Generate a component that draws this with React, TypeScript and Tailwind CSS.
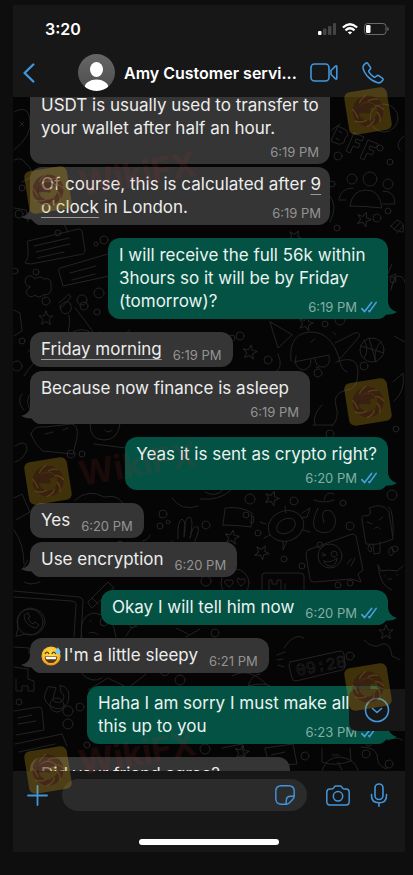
import React from "react";

const Ticks = () => (
  <svg className="h-3 w-4" viewBox="0 0 16 12" fill="none" stroke="#4a9fe0" strokeWidth="1.600" strokeLinecap="round" strokeLinejoin="round">
    <path d="M.8 7.600 3.600 10.600 10.600 1.400M7.800 9.800l.7.800L15.200 1.400" />
  </svg>
);

type BubbleProps = {
  mine?: boolean;
  tail?: boolean;
  time: string;
  // below: time sits on its own row, over: time shares the last text line
  layout?: "inline" | "below" | "over";
  className?: string;
  children: React.ReactNode;
};

const Bubble = ({ mine, tail, time, layout = "inline", className = "", children }: BubbleProps) => {
  const stamp = (
    <span className={`flex items-center gap-1 text-[13px] leading-3 whitespace-nowrap ${mine ? "text-[#86ada4]" : "text-[#939393]"}`}>
      {time}
      {mine && <Ticks />}
    </span>
  );
  return (
    <div
      className={`relative grid rounded-xl px-[11px] py-1.5 text-[17px] leading-[23px] whitespace-nowrap ${
        mine ? "self-end bg-[#045244] text-[#e9f3f0]" : "self-start bg-[#353535] text-[#ededed]"
      } ${className}`}
    >
      {tail && !mine && (
        <svg className="absolute bottom-0 -left-[9px] h-[18px] w-5 text-[#353535]" viewBox="0 0 20 18" fill="currentColor">
          <path d="M9 0C9 5 6 8.500 0 9.800c2 1.700 6 2.500 11 2.700C13 16 16 18 20 18V0Z" />
        </svg>
      )}
      {tail && mine && (
        <svg className="absolute -right-[9px] bottom-0 h-[18px] w-5 text-[#045244]" viewBox="0 0 20 18" fill="currentColor">
          <path d="M11 0c0 5 3 9 9 11-2 1.700-6 2.500-11 2.700C7 16.500 4 18 0 18V0Z" />
        </svg>
      )}
      {layout === "inline" && (
        <div className="relative flex items-end gap-[11px]">
          <p className="flex items-center">{children}</p>
          {stamp}
        </div>
      )}
      {layout === "below" && (
        <div className="relative flex flex-col">
          <p>{children}</p>
          <div className="flex h-[18px] items-end justify-end">{stamp}</div>
        </div>
      )}
      {layout === "over" && (
        <div className="relative grid">
          <p className="col-start-1 row-start-1">{children}</p>
          <div className="col-start-1 row-start-1 self-end justify-self-end">{stamp}</div>
        </div>
      )}
    </div>
  );
};

const SweatSmile = () => (
  <svg role="img" aria-label="😅" className="mr-[3px] h-5 w-5" viewBox="0 0 20 20">
    <defs>
      <radialGradient id="face" cx=".5" cy=".4" r=".6">
        <stop offset="0" stopColor="#ffe14a" />
        <stop offset=".7" stopColor="#fbc02d" />
        <stop offset="1" stopColor="#e88f1c" />
      </radialGradient>
    </defs>
    <circle cx="10" cy="10" r="9.600" fill="url(#face)" />
    <path d="M4.200 7.600q1.800-3 3.700 0M11 7.600q1.800-3 3.700 0" fill="none" stroke="#5b3610" strokeWidth="1.200" strokeLinecap="round" />
    <path d="M3.800 10.500h12.400c0 4.200-2.700 6.600-6.200 6.600s-6.200-2.400-6.200-6.600Z" fill="#5b3610" />
    <path d="M4.600 11h10.800c-.2 1.300-.6 1.900-.9 2.200H5.500c-.4-.5-.8-1.200-.9-2.200Z" fill="#fff" />
    <path d="M16.800 1.200c1.600 2 2.700 3.400 2.700 5a2.600 2.600 0 0 1-5.100 0c0-1.500 1.100-3 2.400-5Z" fill="#7cc8f2" />
  </svg>
);

const STAR = "M0-7 2-2 7-2 3 1.500 4.500 6.500 0 3.500-4.500 6.500-3 1.500-7-2-2-2Z";
const stars = [
  [46, 318, 0], [364, 219, 20], [250, 352, 10], [306, 323, 15], [272, 498, 20], [262, 552, 30],
  [232, 537, 10], [386, 632, 0], [242, 752, 10], [295, 237, 30], [216, 610, 20], [90, 100, 10],
];
const dots = [
  [338, 156, 4], [380, 148, 3], [390, 162, 3], [337, 228, 3], [377, 218, 4], [388, 211, 3], [332, 184, 3],
  [22, 188, 3], [19, 214, 4], [82, 300, 5], [99, 293, 5], [46, 301, 4], [84, 306, 4], [97, 312, 3],
  [22, 341, 3], [104, 240, 4], [96, 244, 2], [393, 280, 3], [340, 320, 5], [325, 324, 3], [232, 338, 3],
  [240, 336, 4], [268, 360, 4], [318, 373, 4], [364, 366, 4], [17, 366, 5], [71, 454, 4], [82, 454, 3],
  [250, 499, 5], [294, 501, 4], [343, 503, 3], [350, 526, 4], [258, 533, 3], [284, 559, 3], [302, 566, 3],
  [246, 515, 3], [206, 525, 4], [395, 549, 3], [163, 514, 4], [168, 522, 2], [160, 526, 3], [206, 581, 5],
  [338, 585, 3], [350, 583, 3], [215, 633, 4], [57, 705, 7], [68, 711, 5], [80, 707, 4], [68, 724, 5],
  [87, 745, 3], [19, 702, 3], [305, 756, 4], [366, 754, 4], [369, 743, 3], [389, 764, 4], [350, 656, 4],
  [189, 695, 4], [180, 680, 5], [205, 749, 5], [120, 544, 3], [104, 622, 4], [15, 271, 3], [36, 272, 3],
  [58, 233, 3], [392, 495, 5], [320, 545, 3], [396, 429, 3], [330, 434, 4],
];

const Wallpaper = () => (
  <svg className="absolute inset-0 h-full w-full" viewBox="13 97 392 674" preserveAspectRatio="xMinYMin slice" fill="none" stroke="#232325" strokeWidth="1" strokeLinecap="round" strokeLinejoin="round">
    {stars.map(([x, y, r]) => (
      <path key={`${x}-${y}`} d={STAR} transform={`translate(${x} ${y}) rotate(${r})`} />
    ))}
    {dots.map(([x, y, r]) => (
      <circle key={`${x}-${y}`} cx={x} cy={y} r={r} />
    ))}
    {/* left edge face and cloud */}
    <path d="M14 112q14-8 16 8t-16 30M20 122l4 4m-4 0 4-4M14 160q8-4 12 4 8 4 4 14l-8 4" />
    <path d="M14 208l12 2 2 12M38 225l24-5 6 12M70 212l24-6 10 14" />
    {/* BFF letters */}
    <path d="m338 126-7 15 7 3q7 1 7-6 5-3 1-8l-8-4m1 5 3 2m-6 5 3 2M354 133l-8 18 4 2 3-7 5 2 2-4-5-2 1-3 6 2 2-4-10-4M368 140l-8 18 4 2 3-7 5 2 2-4-5-2 1-3 6 2 2-4-10-4" />
    <circle cx="384" cy="118" r="14" />
    <path d="M404 136q-10 8-4 14M332 130l8-6M330 196q8 10 0 26" />
    {/* group of people */}
    <circle cx="370" cy="179" r="7" />
    <circle cx="352" cy="179" r="5" />
    <circle cx="388" cy="184" r="5" />
    <path d="M350 206q2-16 16-16t16 18q-16-2-32-2M339 199q2-11 14-11M346 200h-7M383 191q12 0 12 13h-12M391 226l6-6q8 2 6 12-8 0-12-6Zm3 3 6-6m-3 10 7-8" />
    {/* chat cards */}
    <path d="m28 241 51-12q2 0 3 2l3 19q0 3-2 4l-52 10-6-1 3-6Z" />
    <path d="m34 246 35-8m-33 14 34-8m-33 14 27-6M60 268l48-14m-48 14q-2 1-1 4l4 14 46-10M70 273l26-7m-24 14 23-6" />
    <path d="M30 287q-7-2-4-9 5-5 9 1 5-4 9 0 8-2 7 7 2 9-8 9-4 4-8 0-5 4-8-1-3-2 3-7Z" />
    {/* flower and hat */}
    <path d="m59 303 10-9 2 3-10 11m-1-2q6-7 10-3 4 8-4 11-6-1-6-8Zm9 9q2 12-3 24M75 308q10 12 18 24M14 310l6 3 2 18-8 5M24 376q10-16 26-28M28 352q7-11 18-6l-8 18M50 396q16-8 34 4M70 334q12-9 23 0" />
    <path d="M22 394q-6 8 2 16m6-16q-6 8 2 18M100 332q16 12 30-2" />
    {/* girl with sunglasses */}
    <path d="M291 361q-3-28 20-29 20 0 28 26 2 12 8 14M294 362l35-7m-33 1q-3 12 7 14 8-1 8-10m4-1q1 9 9 8 7-2 5-11M316 367l3 1M335 343l20-10q6-1 4 4l-20 23m-28-18 4-3m18-7 3 3M336 362q22-8 22 10t-12 18q-14 4-10 16t-4 20M278 354q6 14-3 18M270 322l8 26 14-13ZM392 264l-6 14 10-4-4 12M391 290q2-14 8-14t8 14" />
    <circle cx="372" cy="350" r="12" />
    <path d="m361 346 23 7m-15-15 7 24m-12-22q6 10 0 18m18-17q-8 6-7 19M394 336l11 6M393 382l10-9q3 18-9 28M322 405q-10 10-7 20m-2 0h20M376 266q1 8-6 13 0-10 6-13" />
    {/* mug, dogs and circles */}
    <path d="M31 434q3-9 14-7l26-3q8 0 6 14l-4 16-30-3q-8-6-12-17Zm14 0 8-2m10-2 5-2M15 446q12-8 12 4-4 10-12 12M90 424q0 16 14 16t16-16M105 430q3 4 7 0M94 444l32 4" />
    <path d="M14 498l8-4 8 18-14 8M75 500q14-12 29-3 18-4 22 14l-8 8M14 530q10 14 10 34M22 570l6-10m-4 22q6 4 16 0M150 535q-2 5-7 6m35-2q-1-18 4-20 5 2 2 18 0-21 6-20 4 3 0 21 3-14 8-11 2 6-8 24-16 4-18-10M172 498q10 14 26 8" />
    {/* chick, tube, cherry, ice cream */}
    <path d="M200 499q20 2 31-9M205 492q10 6 18-2M223 525l2-17q16-2 27 5l-1 14q-14-2-28-2Zm28-9 3 1-1 6-3-1" />
    <ellipse cx="286" cy="526" rx="18" ry="15" transform="rotate(-20 286 526)" />
    <ellipse cx="286" cy="526" rx="10" ry="7" transform="rotate(-30 286 526)" />
    <path d="m285 506 1 7m16 0 8-5-3 9-6 1m2 12 7 2m-27 9 0 9 4-9m-17-6-6 3m2-14-6-2m22 3" />
    <path d="M318 508q-8 16-2 22 10 6 17-1 6-10-2-18-12-4-7 12M324 500q2-10 10-6m-20 6q10 4 20 0" />
    <path d="m362 520 4 24q12 2 27-5l-4-27q-6-10-20-4 4 6-2 8-6-2-5 4Zm11 24 1 10 6-1v-11m9-35q5 5 4 29M367 522l5 2m7-4 4-3m-9 12q3-4 6 0" />
    {/* laughing card */}
    <path d="m308 550 44-16q3 0 4 2l7 34-5 4 3 8-10-3-37 3q-4 0-4-3l-4-24q0-4 2-5Z" />
    <circle cx="330" cy="556" r="12" />
    <path d="m322 553 4 2-4 1m10-4a3 3 0 1 0 .1-.1M324 561q6 3 13-3-1 9-7 8-5 0-6-5m23 3 4-5m0 7 4-8M369 545q4 3 2 7-5-1-2-7m22 2q6 4 0 9-5-4 0-9M378 565l3 6q10-2 16 0l6-5M378 565q2 22 14 25m-8-14h1m12-1h1m-10 4h4" />
    {/* hearts and Hi sign */}
    <circle cx="235" cy="583" r="14" />
    <path d="M229 587q-7-5-3-7 3-1 3 1 2-3 4 0 1 3-4 6m12-1q-6-6-3-8l3 2q2-3 4 0 1 3-4 6M262 590v-14q0-3 3-3h35q4 0 4 3v14M269 590v-10h3v4h5v-4h4v10m4-6v6" />
    {/* phone and rocket */}
    <path d="M14 591l65 6q4 1 4 4l-2 37M14 597l58 4q4 1 4 3l-2 33" />
    <circle cx="30" cy="622" r="13" />
    <path d="m16 636 2-8q-3-18 12-20 16 2 15 16-5 14-19 10Zm8-20q1 10 12 12l3-3-4-3-2 2q-4-2-5-6l2-1-2-4ZM14 647l15 1v6M88 602l20-20 6 6-22 20Zm4-4 6 6M82 638q-4-22 12-25 20 2 22 24M90 621h1m10 4h1m-13 8q6-2 9 2M126 636q8-16 22-12M128 622l3 6 6-2M176 628l12 6m12-5-14 8M14 667l14 2v10l6 2v10h-6v-5h-6v5h-6v-12" />
    <path d="M48 687q-8 12 2 19 12 7 18-4 4-14-8-17l1 7q6 5 0 10-8 2-8-4l3-10ZM82 674q10 10 20 4m-14 12 20-12 20 10 18-14M160 672q4 8 10 0M14 711l25-4q3 0 3 3l2 20-28 5M18 718l14-3m-14 9 18-3M15 744l47-10 5 12M19 752l36-8" />
    {/* calendar, clock, paper plane */}
    <path d="m290 662 50-11q3 0 4 3l1 12q0 3-3 4l-46 11q-3 0-4-3l-3-12q0-3 1-4Z" />
    <text x="297" y="676" transform="rotate(-11 297 676)" className="font-mono text-[17px]" strokeWidth=".6">
      09:28
    </text>
    <path d="M277 655l8-3m-8 8 6-1m-5 6 6 2M364 640q10 10 18 4 8-2 10 12l8 4M260 674q-8 0-12 12 16-4 22 0M232 676q18-10 36 10M222 748l20-4 3 22M265 748l28-4 4 20q-20 2-28-2Zm6 7 14-3M322 748v14q12 5 29-1l-1-13M332 755h7M322 771q4-14 18-14 16 2 18 14M338 762l4 8M361 747q14 0 16 8 0 12 10 14M388 740q8-4 14 0M284 648q10-16 20-10M220 671q2-10 12-12M202 664l10-6" />
  </svg>
);

const Badge = ({ className }: { className: string }) => (
  <svg className={`absolute h-12 w-12 ${className}`} viewBox="0 0 48 48">
    <g transform="rotate(-9 24 24)">
      <rect x="2.500" y="2.500" width="43" height="43" rx="6" fill="#c79a1c" fillOpacity=".3" />
      <circle cx="24" cy="24" r="12.500" fill="none" stroke="#330a1c" strokeOpacity=".42" strokeWidth="6" />
      {/* bird's head cutting into the ring */}
      <path d="M13 25c1-6 6-9 11-9 4 0 7 2 8 6-3-1-5-1-6 1 1 1 1 3-1 4-3-2-7-2-12-2Z" fill="#330a1c" fillOpacity=".42" />
      <path d="M24 8.500q-5 2-7 6M35 14q-5-2-9 0M39.500 25q-3-5-7-5M34 36q2-5-1-9M21 39q6-1 8-6M10 32q5 3 11 1M9 20q3 4 4 9" fill="none" stroke="#a98322" strokeOpacity=".3" strokeWidth="1.300" strokeLinecap="round" />
    </g>
  </svg>
);

const Watermarks = () => (
  <div aria-hidden="true" className="pointer-events-none absolute inset-0 overflow-hidden">
    <Badge className="top-[161px] left-[11px]" />
    <Badge className="top-[82px] right-[13px]" />
    <Badge className="top-[373px] right-[13px]" />
    <Badge className="top-[452px] left-[11px]" />
    <Badge className="top-[658px] right-[13px]" />
    <Badge className="top-[741px] left-[11px]" />
    {["top-[149px]", "top-[439px]", "top-[728px]"].map((top) => (
      <span key={top} className={`absolute left-[65px] ${top} -rotate-10 text-[34px] leading-10 font-bold text-[#b03030]/15`}>
        WikiFX
      </span>
    ))}
  </div>
);

const Header = () => (
  <header className="shrink-0 bg-[#171717] pb-[5px]">
    <div className="flex h-12 items-center justify-between pr-4 pl-8">
      <span className="text-[16px] font-semibold text-white">3:20</span>
      <div className="flex items-center gap-1.5">
        <svg className="h-3 w-[18px]" viewBox="0 0 18 12" fill="#454545">
          <rect x="0" y="8" width="3.500" height="4" rx="1" fill="#fff" />
          <rect x="5" y="5.500" width="3.500" height="6.500" rx="1" />
          <rect x="10" y="3" width="3.500" height="9" rx="1" />
          <rect x="15" y="0" width="3" height="12" rx="1" />
        </svg>
        <svg className="h-3 w-4" viewBox="0 0 16 12" fill="none" stroke="#fff" strokeWidth="2.300">
          <path d="M.9 4.500q7.100-6.400 14.200 0M3.500 7.300q4.500-4 9 0" />
          <path d="M8 11.600 5.800 9.300q2.200-1.800 4.400 0Z" fill="#fff" stroke="none" />
        </svg>
        <svg className="h-3 w-[25px]" viewBox="0 0 25 12" fill="none">
          <rect x=".5" y=".5" width="21.500" height="11" rx="3" stroke="#6a6a6a" />
          <rect x="2" y="2" width="4.500" height="8" rx="1.200" fill="#fff" />
          <path d="M23.300 4v4q1.500-.6 1.500-2t-1.500-2Z" fill="#6a6a6a" />
        </svg>
      </div>
    </div>
    <div className="flex h-[39px] items-center pr-[21px] pl-2.5">
      <button aria-label="Back" className="text-[#4296dc]">
        <svg className="h-5 w-3" viewBox="0 0 12 20" fill="none" stroke="currentColor" strokeWidth="2.400" strokeLinecap="round" strokeLinejoin="round">
          <path d="M10.300 1.500 1.600 10l8.700 8.500" />
        </svg>
      </button>
      <svg className="ml-[43px] h-[37px] w-[37px] shrink-0" viewBox="0 0 37 37">
        <defs>
          <clipPath id="avatar">
            <circle cx="18.500" cy="18.500" r="18.500" />
          </clipPath>
          <linearGradient id="avatarBg" x2="0" y2="1">
            <stop stopColor="#666" />
            <stop offset="1" stopColor="#4d4d4d" />
          </linearGradient>
        </defs>
        <g clipPath="url(#avatar)">
          <path fill="url(#avatarBg)" d="M0 0h37v37H0z" />
          <ellipse cx="18.500" cy="15.500" rx="6.500" ry="7.500" fill="#fff" />
          <ellipse cx="18.500" cy="34" rx="12" ry="8.500" fill="#fff" />
        </g>
      </svg>
      <h1 className="ml-[9px] min-w-0 flex-1 text-[16px] font-semibold whitespace-nowrap text-white">Amy Customer servi...</h1>
      <button aria-label="Video call" className="text-[#4296dc]">
        <svg className="h-[19px] w-7" viewBox="0 0 28 19" fill="none" stroke="currentColor" strokeWidth="1.600" strokeLinejoin="round">
          <rect x="1" y="1" width="18" height="17" rx="3.500" />
          <path d="M21 7.500 25.500 3.200q1.300-.9 1.300.6v11.400q0 1.500-1.300.6L21 11.500Z" />
        </svg>
      </button>
      <button aria-label="Voice call" className="ml-6 text-[#4296dc]">
        <svg className="h-[22px] w-[22px]" viewBox="0 0 22 22" fill="none" stroke="currentColor" strokeWidth="1.600" strokeLinejoin="round">
          <path d="M2.200 2.600 3.800 1.100q1-.7 1.900.3l2.700 3.900q.6 1-.2 1.900L7 8.600q-.5.700 0 1.500 1.800 2.900 4.800 4.900.8.500 1.500 0l1.500-1.200q.9-.7 1.900-.1l3.800 2.700q1 .9.200 1.900l-1.500 1.600q-1.600 1.500-4.100.7Q9.400 18.800 5.200 14 1.800 9.900 1.100 6.300.7 4.100 2.200 2.600Z" />
        </svg>
      </button>
    </div>
  </header>
);

const Composer = () => (
  <footer className="shrink-0 bg-[#171717] pt-2">
    <form className="flex h-8 items-center pr-[17px] pl-3.5 text-[#4296dc]" onSubmit={(e) => e.preventDefault()}>
      <button type="button" aria-label="Attach" className="shrink-0">
        <svg className="h-[21px] w-[21px]" viewBox="0 0 21 21" stroke="currentColor" strokeWidth="1.800" strokeLinecap="round">
          <path d="M10.500 1v19M1 10.500h19" />
        </svg>
      </button>
      <div className="ml-3.5 flex h-8 min-w-0 flex-1 items-center rounded-full bg-[#2b2b2b] pr-3 pl-4">
        <input aria-label="Message" type="text" className="min-w-0 flex-1 bg-transparent text-[17px] text-white outline-none" />
        <button type="button" aria-label="Stickers" className="shrink-0">
          <svg className="h-5 w-5" viewBox="0 0 20 20" fill="none" stroke="currentColor" strokeWidth="1.400" strokeLinejoin="round">
            <path d="M19.200 11V6.500Q19.200.8 13.500.8h-7Q.8.800.8 6.500v7q0 5.700 5.700 5.700H11q2 0 3.500-1.500l3.200-3.200q1.500-1.500 1.500-3.500Z" />
            <path d="M11 19q.3-2 .3-3.500 0-4.200 4.200-4.200 2 0 3.500-.3" />
          </svg>
        </button>
      </div>
      <button type="button" aria-label="Camera" className="ml-[19px] shrink-0">
        <svg className="h-[21px] w-6" viewBox="0 0 24 21" fill="none" stroke="currentColor" strokeWidth="1.500" strokeLinejoin="round">
          <path d="M4 4h2q1 0 1.500-.8l.8-1.300Q8.900 1 9.900 1h4.200q1 0 1.600.9l.8 1.300Q17 4 18 4h2q3.200 0 3.200 3.200v9.300q0 3.500-3.200 3.500H4Q.8 20 .8 16.500V7.200Q.8 4 4 4Z" />
          <circle cx="12" cy="11.300" r="4.700" />
        </svg>
      </button>
      <button type="button" aria-label="Record" className="ml-5 shrink-0">
        <svg className="h-6 w-[18px]" viewBox="0 0 18 24" fill="none" stroke="currentColor" strokeWidth="1.600" strokeLinecap="round">
          <rect x="5" y="1" width="8" height="15.500" rx="4" />
          <path d="M1.500 11.500v1.300q0 7 7.500 7t7.500-7v-1.300M9 20v3.200" />
        </svg>
      </button>
    </form>
    <div className="mx-auto mt-7 mb-[7px] h-1.5 w-[140px] rounded-full bg-white" />
  </footer>
);

const u = "underline decoration-[#9a9a9a] decoration-1 underline-offset-4";

const App = () => {
  return (
    <div className="h-screen bg-[#0e0e0e] pt-[5px] pr-2 pb-[23px] pl-[13px] font-['Inter','Liberation_Sans',sans-serif]">
      <div className="relative flex h-full flex-col">
        <Header />

        <main className="relative min-h-0 flex-1 overflow-hidden bg-[#050505]">
          <Wallpaper />
          <div className="relative -mt-[9px] flex flex-col px-[17px]">
            <Bubble time="6:19 PM" layout="below" className="w-[300px] rounded-t-none">
              USDT is usually used to transfer to
              <br />
              your wallet after half an hour.
            </Bubble>
            <Bubble tail time="6:19 PM" layout="over" className="mt-[3px] w-[300px]">
              Of course, this is calculated after <span className={u}>9</span>
              <br />
              <span className={u}>o'clock</span> in London.
            </Bubble>
            <Bubble mine tail time="6:19 PM" layout="over" className="mt-[13px] w-[280px]">
              I will receive the full 56k within
              <br />
              3hours so it will be by Friday
              <br />
              (tomorrow)?
            </Bubble>
            <Bubble time="6:19 PM" className="mt-[13px]">
              <span className={u}>Friday morning</span>
            </Bubble>
            <Bubble tail time="6:19 PM" layout="below" className="mt-1 w-[280px]">
              Because now finance is asleep
            </Bubble>
            <Bubble mine tail time="6:20 PM" layout="below" className="mt-[13px]">
              Yeas it is sent as crypto right?
            </Bubble>
            <Bubble time="6:20 PM" className="mt-[13px]">
              Yes
            </Bubble>
            <Bubble tail time="6:20 PM" className="mt-1">
              Use encryption
            </Bubble>
            <Bubble mine tail time="6:20 PM" className="mt-[13px]">
              Okay I will tell him now
            </Bubble>
            <Bubble tail time="6:21 PM" className="mt-[13px]">
              <SweatSmile />
              I'm a little sleepy
            </Bubble>
            <Bubble mine tail time="6:23 PM" layout="over" className="mt-[13px] w-[301px]">
              Haha I am sorry I must make all
              <br />
              this up to you
            </Bubble>
            <Bubble time="6:24 PM" className="mt-[13px] w-[260px]">
              Did your friend agree?
            </Bubble>
          </div>
          <button aria-label="Scroll to latest" className="absolute right-0 bottom-10 flex h-[42px] w-14 items-center justify-center rounded-l-lg bg-[#161616] text-[#4296dc]">
            <svg className="h-[26px] w-[26px]" viewBox="0 0 26 26" fill="none" stroke="currentColor" strokeWidth="1.600" strokeLinecap="round" strokeLinejoin="round">
              <circle cx="13" cy="13" r="11.500" />
              <path d="m8.500 11.500 4.500 4 4.500-4" />
            </svg>
          </button>
        </main>

        <Composer />
        <Watermarks />
      </div>
    </div>
  );
};

export default App;
